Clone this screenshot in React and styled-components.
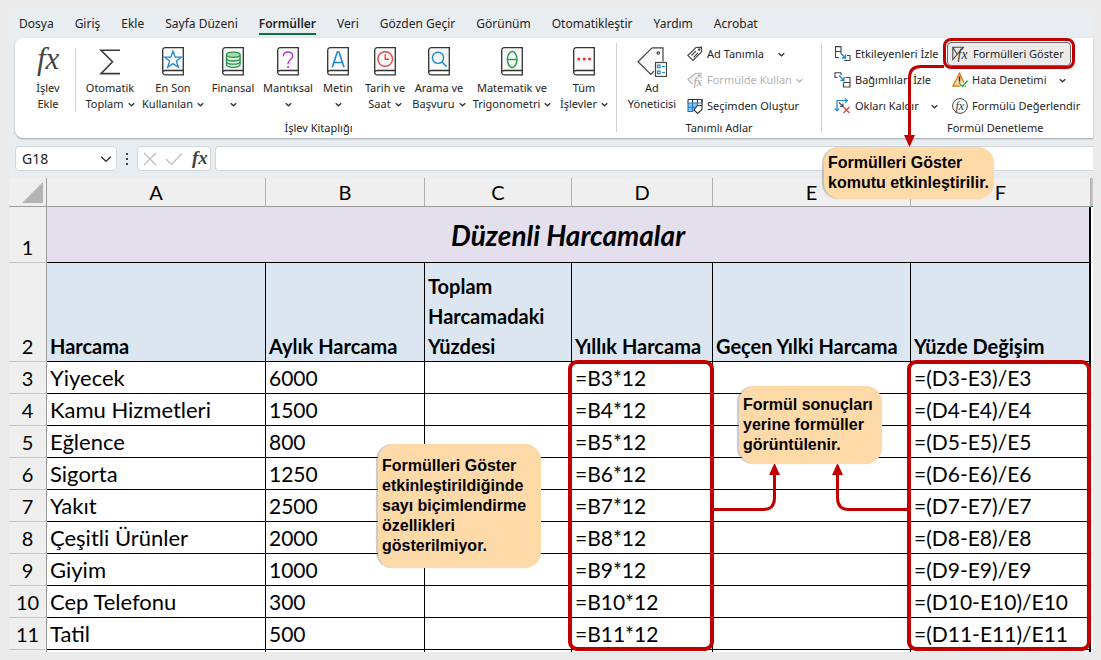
import React from 'react';
import styled, { createGlobalStyle, css } from 'styled-components';

const UI = '"Noto Sans", "Open Sans", sans-serif';
const SHEET = 'Lato, "Noto Sans", sans-serif';
const RED = '#c00000';

const GlobalStyle = createGlobalStyle`
  *, *::before, *::after { box-sizing: border-box; }
  body { margin: 0; background: #ebebeb; font-family: ${UI}; color: #242424; }
  button, input { font: inherit; color: inherit; }
  button { border: 0; padding: 0; background: none; cursor: pointer; }
`;

const Page = styled.main`
  padding: 9px 8px 8px 9px;
`;
const Window = styled.div`
  background: #e8edf1;
`;

/* Tabs */
const Tabs = styled.nav`
  display: flex;
  gap: 21px;
  height: 29px;
  padding: 6px 10px 0;
`;
const Tab = styled.a`
  height: 20px;
  font-size: 12px;
  line-height: 18px;
  color: #242424;
  text-decoration: none;
  white-space: nowrap;
  ${(p) => p.$active && css`
    font-weight: 600;
    border-bottom: 2px solid #107040;
  `}
`;

/* Ribbon */
const Ribbon = styled.div`
  display: flex;
  height: 100px;
  margin-left: 6px;
  background: #fff;
  border-radius: 8px 0 0 8px;
  box-shadow: 0 1px 2px rgba(0, 0, 0, 0.3);
`;
const Group = styled.section`
  display: flex;
  flex-direction: column;
  flex: ${(p) => (p.$grow ? '1 0 auto' : 'none')};
  padding-top: 3px;
  padding-left: ${(p) => p.$inset || 0}px;
`;
const GroupBody = styled.div`
  display: flex;
  height: 79px;
`;
const GroupLabel = styled.div`
  font-size: 11px;
  line-height: 16px;
  text-align: center;
  white-space: nowrap;
  ${(p) => p.$left && css`
    text-align: left;
    padding-left: 113px;
  `}
`;
const Divider = styled.div`
  width: 1px;
  height: ${(p) => p.$h}px;
  margin-top: ${(p) => p.$top}px;
  background: #d0d0d0;
`;
const BigButton = styled.button`
  display: flex;
  flex-direction: column;
  align-items: center;
  width: ${(p) => p.$w}px;
  padding-top: 6px;
  font-size: 11px;
  line-height: 16px;
  white-space: nowrap;
`;
const BigIcon = styled.span`
  display: grid;
  place-items: center;
  height: 29px;
  margin-bottom: 4px;
`;
const BigLine = styled.span`
  display: flex;
  align-items: center;
  justify-content: center;
  gap: 4px;
  height: 16px;
`;
const SmallColumn = styled.div`
  display: flex;
  flex-direction: column;
  width: ${(p) => p.$w}px;
`;
const SmallButton = styled.button`
  display: flex;
  align-items: center;
  gap: 4px;
  height: 26px;
  font-size: 11px;
  line-height: 16px;
  white-space: nowrap;
  color: ${(p) => (p.disabled ? '#b4b4b4' : '#242424')};
  svg { flex: none; }
`;
const Spread = styled.span`
  display: flex;
  align-items: center;
  gap: ${(p) => p.$gap}px;
`;
const ToggleWrap = styled.div`
  position: relative;
  height: 26px;
  margin-left: -5px;
  padding-top: 1px;
`;
const ToggleButton = styled(SmallButton)`
  width: 124px;
  height: 24px;
  padding-left: 4px;
  background: #ebebeb;
  border: 1px solid #6a6a6a;
  border-radius: 4px;
`;
const ToggleFrame = styled.div`
  position: absolute;
  inset: -3px auto auto -4px;
  width: 132px;
  height: 31px;
  border: 3px solid ${RED};
  border-radius: 8px;
  pointer-events: none;
`;

/* Formula bar */
const FormulaBar = styled.div`
  display: flex;
  height: 40px;
  padding: 8px 0 7px 6px;
`;
const box = css`
  height: 25px;
  background: #fff;
  border: 1px solid #d4d7da;
  border-radius: 4px;
`;
const NameBox = styled.div`
  ${box}
  display: flex;
  align-items: center;
  width: 102px;
  padding-right: 4px;
  input {
    flex: 1;
    min-width: 0;
    padding: 0 0 0 6px;
    border: 0;
    background: none;
    font-size: 14px;
    line-height: 20px;
  }
  button { display: flex; }
`;
const Dots = styled.span`
  display: grid;
  place-items: center;
  width: 20px;
`;
const FxBox = styled.div`
  ${box}
  display: flex;
  align-items: center;
  gap: 8px;
  width: 74px;
  padding-left: 5px;
  margin-right: 4px;
  button { display: flex; }
`;
const FormulaInput = styled.input`
  ${box}
  flex: 1;
  min-width: 0;
  padding: 0 8px;
  border-right: 0;
  border-radius: 4px 0 0 4px;
`;

/* Sheet */
const Sheet = styled.table`
  width: 100%;
  table-layout: fixed;
  border-collapse: separate;
  border-spacing: 0;
  background: #fff;
  font-family: ${SHEET};
  font-size: 21px;
  color: #000;
`;
const Corner = styled.td`
  height: 29px;
  padding: 4px 3px 2px 0;
  background: #efefef;
  border-right: 1px solid #9b9b9b;
  border-bottom: 1px solid #9b9b9b;
  svg { display: block; margin-left: auto; }
`;
const ColHead = styled.th`
  height: 29px;
  padding: 0;
  background: #efefef;
  border-right: 1px solid #b0b0b0;
  border-bottom: 1px solid #9b9b9b;
  font-size: 20px;
  font-weight: 400;
  line-height: 28px;
`;
const RowHead = styled.th`
  padding: 0;
  background: #efefef;
  border-right: 1px solid #9b9b9b;
  border-bottom: 1px solid #c4c4c4;
  font-size: 20px;
  font-weight: 400;
  line-height: 30px;
  vertical-align: bottom;
`;
const TitleCell = styled.td`
  height: 56px;
  padding: 0;
  background: #e3dfec;
  border-right: 2px solid #000;
  border-bottom: 1px solid #000;
  font-size: 28px;
  font-weight: 700;
  font-style: italic;
  text-align: center;
`;
const HeadCell = styled.td`
  height: 99px;
  padding: 0 0 0 3px;
  background: #dce6f0;
  border-right: ${(p) => (p.$last ? 2 : 1)}px solid #000;
  border-bottom: 1px solid #000;
  font-size: 20px;
  font-weight: 700;
  line-height: 30px;
  vertical-align: bottom;
  white-space: ${(p) => (p.$wrap ? 'normal' : 'nowrap')};
`;
const Cell = styled.td`
  position: relative;
  height: 32px;
  padding: 0 0 0 3px;
  border-right: ${(p) => (p.$last ? 2 : 1)}px solid #000;
  border-bottom: 1px solid #000;
  line-height: 31px;
  white-space: nowrap;
`;
const NameCell = styled(Cell)`
  font-size: 22px;
`;
const TailCell = styled.td`
  height: 2px;
  padding: 0;
  background: ${(p) => (p.$head ? '#efefef' : '#fff')};
  border-right: ${(p) => (p.$w ? `${p.$w}px solid ${p.$head ? '#9b9b9b' : '#000'}` : 0)};
`;
const Edge = styled.td`
  padding: 0;
  background: ${(p) => (p.$head ? '#c4c4c4' : '#fff')};
  border-bottom: 1px solid ${(p) => (p.$head ? '#107040' : '#d9d9d9')};
`;

/* Annotations */
const Frame = styled.div`
  position: absolute;
  z-index: 2;
  inset: -2px -2px auto -4px;
  height: 291px;
  border: 4px solid ${RED};
  border-radius: 9px;
  pointer-events: none;
`;
const Callout = styled.aside`
  position: absolute;
  z-index: 3;
  top: ${(p) => p.$top}px;
  left: ${(p) => p.$left}px;
  width: ${(p) => p.$w}px;
  padding: ${(p) => p.$pad} 4px;
  background: #fedaa8;
  border-radius: 16px;
  box-shadow: -2px 0 1px rgba(120, 120, 120, 0.4);
  color: #000;
  font: 700 16px/20px "Liberation Sans", Arial, sans-serif;
  white-space: nowrap;
`;
const Connector = styled.svg`
  position: absolute;
  z-index: 2;
  top: ${(p) => p.$top}px;
  left: ${(p) => p.$left}px;
  fill: none;
  stroke: ${RED};
  stroke-width: 3;
  overflow: visible;
  pointer-events: none;
`;

/* Icons */
const Chevron = ({ size = 7, color = '#333' }) => (
  <svg width={size} height={size} viewBox="0 0 7 7" fill="none" stroke={color} strokeWidth={size > 7 ? 0.8 : 1.3}>
    <path d="M.7 2.2 3.5 4.8 6.3 2.2" />
  </svg>
);
const FxGlyph = ({ w, h, size, x, y, color = '#333', weight = 400 }) => (
  <svg width={w} height={h} overflow="visible">
    <text x={x} y={y} fontSize={size} fontWeight={weight} fontStyle="italic" fontFamily="Liberation Serif, serif" fill={color}>fx</text>
  </svg>
);
const Book = ({ children }) => (
  <svg width="22" height="29" viewBox="0 0 22 29" fill="none">
    <path d="M3.5.7H21.3V23.5H3.5Q.7 23.5.7 25.6V3.5Q.7.7 3.5.7Z" fill="#fafafa" />
    <path d="M21.3 27.8H3.5Q.7 27.8.7 25V3.5Q.7.7 3.5.7H21.3V28.4M21.3 23.5H3.5Q.7 23.5.7 25.8" stroke="#333" strokeWidth="1.3" />
    {children}
  </svg>
);
const SigmaIcon = () => (
  <svg width="22" height="26" viewBox="0 0 22 26" fill="none" stroke="#3b3b3b" strokeWidth="1.6">
    <path d="M21 1.2H2L13.5 12.8 2 24.6H21" />
  </svg>
);
const StarIcon = () => (
  <Book><path d="m11 4.2 2.2 6h6.2l-5 3.9 1.9 6.1L11 16.6l-5.3 3.6 1.9-6.100-5-3.900h6.200Z" stroke="#1e88d2" strokeWidth="1.3" /></Book>
);
const CoinsIcon = () => (
  <Book>
    <g stroke="#2b9348" strokeWidth="1.3" fill="#d9f0de">
      <path d="M4.5 8v9.500c0 1.600 3 2.800 6.800 2.800s6.800-1.200 6.800-2.800V8" />
      <ellipse cx="11.3" cy="7.8" rx="6.8" ry="2.6" fill="#a5dcb1" />
      <path d="M4.500 11.200c0 1.600 3 2.800 6.800 2.800s6.800-1.200 6.800-2.800M4.500 14.400c0 1.600 3 2.800 6.800 2.800s6.800-1.200 6.800-2.800" fill="none" />
    </g>
  </Book>
);
const QuestionIcon = () => (
  <Book>
    <path d="M6.300 9.300C6.300 6.400 8.200 5 11 5s4.700 1.500 4.700 4c0 3.600-4.600 3.800-4.600 7.300v1" stroke="#b146c2" strokeWidth="1.5" />
    <circle cx="11.1" cy="20" r="1.1" fill="#b146c2" />
  </Book>
);
const LetterIcon = () => (
  <Book><path d="M5.300 20.300 10.300 5h1.700l5 15.300M7 15.500h8.300" stroke="#1e88d2" strokeWidth="1.6" /></Book>
);
const ClockIcon = () => (
  <Book><circle cx="11.2" cy="12" r="7.3" stroke="#e5484d" strokeWidth="1.4" /><path d="M11.200 7.300v5h4" stroke="#e5484d" strokeWidth="1.4" /></Book>
);
const SearchIcon = () => (
  <Book><circle cx="10" cy="10.8" r="5.6" stroke="#1e88d2" strokeWidth="1.4" /><path d="m14 14.800 4.500 5" stroke="#1e88d2" strokeWidth="1.5" /></Book>
);
const ThetaIcon = () => (
  <Book><ellipse cx="11.2" cy="12.5" rx="4.8" ry="8" stroke="#2b9f48" strokeWidth="1.5" /><path d="M6.400 12.500H16" stroke="#2b9f48" strokeWidth="1.5" /></Book>
);
const MoreIcon = () => (
  <Book><g fill="#e53935"><circle cx="5.8" cy="12" r="1.6" /><circle cx="11.2" cy="12" r="1.6" /><circle cx="16.6" cy="12" r="1.6" /></g></Book>
);
const NameManagerIcon = () => (
  <svg width="30" height="30" viewBox="0 0 30 30" fill="none" stroke="#444" strokeWidth="1.2">
    <path d="M15 .8 1 14.800 13.800 27.500 17 24.200M15 .8H26V14.500" fill="#fafafa" />
    <circle cx="21.3" cy="6" r="1.2" />
    <rect x="18.5" y="15.5" width="11" height="14" fill="#fff" />
    <path d="M25 19.500H28M25 25.500H28" stroke="#1e88d2" />
    <path d="M20.500 18.200h2.500v2.500h-2.500ZM20.500 24.200h2.500v2.500h-2.500Z" stroke="#1e88d2" />
  </svg>
);
const TagIcon = () => (
  <svg width="16" height="16" viewBox="0 0 16 16" fill="none" stroke="#444" strokeWidth="1.1">
    <path d="M9 1.500 14.500 1.200V6L6 14.500.8 9.500Z" />
    <circle cx="12.2" cy="3.6" r=".7" />
    <path d="M4.500 9.500 9 5M6.500 11.300 11 7" />
  </svg>
);
const TagFxIcon = () => (
  <svg width="16" height="16" viewBox="0 0 16 16" fill="none" stroke="#b4b4b4" strokeWidth="1.1">
    <path d="M5.500 12 .8 7.500 8.500 1.200H14V6" fill="#f2f2f2" />
    <circle cx="11.8" cy="3.5" r=".7" />
    <text x="6.500" y="14" fontSize="12" fontStyle="italic" fontFamily="Liberation Serif" fill="#a0a0a0" stroke="none">fx</text>
  </svg>
);
const SelectionIcon = () => (
  <svg width="16" height="16" viewBox="0 0 16 16" fill="none" strokeWidth="1.1">
    <path d="M1 5H10V13.500H1Z" fill="#8cc4f0" />
    <path d="M1 1.500H15V5" stroke="#333" />
    <path d="M5.500 1.500V5M10.500 1.500V5M15 1.500V7M1 1.500V5" stroke="#333" />
    <path d="M6 13.500H1V5H15M1 9.300H8M5.500 5V13.500M10.500 5V7" stroke="#1e78c2" />
    <path d="M10.500 7.500H15V11.500L10.500 15.500 7 12Z" fill="#fff" stroke="#333" />
  </svg>
);
const PrecedentsIcon = () => (
  <svg width="17" height="16" viewBox="0 0 17 16" fill="none" stroke="#444" strokeWidth="1.1">
    <path d="M7 5.500H1.500V.6H7ZM5 11.500H1.500V5.500M7 5.500V7M10 14.500H16V9.500H13" />
    <path d="m6.500 7 5 5M11.500 8.500V12H8" stroke="#1e88d2" strokeWidth="1.3" />
  </svg>
);
const DependentsIcon = () => (
  <svg width="17" height="16" viewBox="0 0 17 16" fill="none" stroke="#444" strokeWidth="1.1">
    <path d="M3.500 5.500H1V.8H7V3M9.500 10.500V15H16V10.500H9.500M11.500 5.500H16V10.500" />
    <path d="m5 3.500 5 5M10 5V8.500H6.500" stroke="#1e88d2" strokeWidth="1.3" />
  </svg>
);
const RemoveArrowsIcon = () => (
  <svg width="17" height="16" viewBox="0 0 17 16" fill="none" stroke="#1e88d2" strokeWidth="1.2">
    <path d="M3 13V2.500H13M11 .3l2.300 2.200L11 4.700M.8 10.700 3 13l2.200-2.300" />
    <path d="m5 4.500 4 4M9 5.500v3H6" stroke="#446" />
    <path d="m9.500 9 6 6M15.500 9l-6 6" stroke="#e5484d" strokeWidth="1.4" />
  </svg>
);
const ShowFormulasIcon = () => (
  <svg width="17" height="16" viewBox="0 0 17 16" fill="none" stroke="#444" strokeWidth="1.1">
    <path d="M11.500 1.200.8 13.500V1.200H11.500ZM1 1.500 5 8" />
    <text x="5.500" y="13" fontSize="14" fontStyle="italic" fontFamily="Liberation Serif" fill="#333" stroke="none">fx</text>
  </svg>
);
const ErrorCheckIcon = () => (
  <svg width="16" height="16" viewBox="0 0 16 16" fill="none">
    <path d="M7.500 1.200 13.500 14H1Z" fill="#ffe0a8" stroke="#e07a10" strokeWidth="1.4" />
    <path d="M7.500 4.500V9.500M7.500 10.500V12" stroke="#222" strokeWidth="1.5" />
    <path d="m7.500 11.500 3 3 5-6" stroke="#fff" strokeWidth="3" />
    <path d="m7.500 11.500 3 3 5-6" stroke="#2b9f48" strokeWidth="1.4" />
  </svg>
);
const EvaluateIcon = () => (
  <svg width="16" height="16" viewBox="0 0 16 16" fill="none">
    <circle cx="8" cy="8" r="7.4" stroke="#444" />
    <text x="3.500" y="11.500" fontSize="12" fontStyle="italic" fontFamily="Liberation Serif" fill="#333">fx</text>
  </svg>
);

const tabs = ['Dosya', 'Giriş', 'Ekle', 'Sayfa Düzeni', 'Formüller', 'Veri', 'Gözden Geçir', 'Görünüm', 'Otomatikleştir', 'Yardım', 'Acrobat'];

const library = [
  { icon: <SigmaIcon />, top: 'Otomatik', bottom: 'Toplam', w: 68 },
  { icon: <StarIcon />, top: 'En Son', bottom: 'Kullanılan', w: 58 },
  { icon: <CoinsIcon />, top: 'Finansal', w: 62 },
  { icon: <QuestionIcon />, top: 'Mantıksal', w: 48 },
  { icon: <LetterIcon />, top: 'Metin', w: 52 },
  { icon: <ClockIcon />, top: 'Tarih ve', bottom: 'Saat', w: 42 },
  { icon: <SearchIcon />, top: 'Arama ve', bottom: 'Başvuru', w: 66 },
  { icon: <ThetaIcon />, top: 'Matematik ve', bottom: 'Trigonometri', w: 80 },
  { icon: <MoreIcon />, top: 'Tüm', bottom: 'İşlevler', w: 64 },
];

const expenses = [
  ['Yiyecek', 6000], ['Kamu Hizmetleri', 1500], ['Eğlence', 800], ['Sigorta', 1250], ['Yakıt', 2500],
  ['Çeşitli Ürünler', 2000], ['Giyim', 1000], ['Cep Telefonu', 300], ['Tatil', 500],
];

const columnWidths = [38, 219, 159, 147, 141, 198, 180, 2];

function RibbonBar() {
  return (
    <Ribbon>
      <Group $inset={6}>
        <GroupBody>
          <BigButton $w={54}>
            <BigIcon><FxGlyph w={24} h={29} size={31} x={1} y={22} color="#444" /></BigIcon>
            <BigLine>İşlev</BigLine>
            <BigLine>Ekle</BigLine>
          </BigButton>
          <Divider $h={62} $top={8} />
          {library.map((b) => (
            <BigButton key={b.top} $w={b.w}>
              <BigIcon>{b.icon}</BigIcon>
              <BigLine>{b.top}</BigLine>
              <BigLine>{b.bottom}<Chevron /></BigLine>
            </BigButton>
          ))}
        </GroupBody>
        <GroupLabel>İşlev Kitaplığı</GroupLabel>
      </Group>
      <Divider $h={89} $top={5} />
      <Group>
        <GroupBody>
          <BigButton $w={70}>
            <BigIcon><NameManagerIcon /></BigIcon>
            <BigLine>Ad</BigLine>
            <BigLine>Yöneticisi</BigLine>
          </BigButton>
          <SmallColumn $w={134}>
            <SmallButton><TagIcon /><Spread $gap={14}>Ad Tanımla <Chevron /></Spread></SmallButton>
            <SmallButton disabled><TagFxIcon /><Spread $gap={4}>Formülde Kullan <Chevron color="#b4b4b4" /></Spread></SmallButton>
            <SmallButton><SelectionIcon />Seçimden Oluştur</SmallButton>
          </SmallColumn>
        </GroupBody>
        <GroupLabel>Tanımlı Adlar</GroupLabel>
      </Group>
      <Divider $h={89} $top={5} />
      <Group $grow $inset={12}>
        <GroupBody>
          <SmallColumn $w={118}>
            <SmallButton><PrecedentsIcon />Etkileyenleri İzle</SmallButton>
            <SmallButton><DependentsIcon />Bağımlıları İzle</SmallButton>
            <SmallButton><RemoveArrowsIcon /><Spread $gap={12}>Okları Kaldır <Chevron /></Spread></SmallButton>
          </SmallColumn>
          <SmallColumn $w={134}>
            <ToggleWrap>
              <ToggleButton aria-pressed="true"><ShowFormulasIcon />Formülleri Göster</ToggleButton>
              <ToggleFrame />
              <Connector width="40" height="84" $top={24} $left={-43}>
                <path d="M40 1.500H17Q5.500 1.500 5.500 13V72" />
                <path d="M0 70H11L5.500 82Z" fill={RED} stroke="none" />
              </Connector>
              <Callout $top={106} $left={-123} $w={170} $pad="6px">
                Formülleri Göster<br />komutu etkinleştirilir.
              </Callout>
            </ToggleWrap>
            <SmallButton><ErrorCheckIcon /><Spread $gap={12}>Hata Denetimi <Chevron /></Spread></SmallButton>
            <SmallButton><EvaluateIcon />Formülü Değerlendir</SmallButton>
          </SmallColumn>
        </GroupBody>
        <GroupLabel $left>Formül Denetleme</GroupLabel>
      </Group>
    </Ribbon>
  );
}

function Formula() {
  return (
    <FormulaBar>
      <NameBox>
        <input aria-label="Ad Kutusu" defaultValue="G18" />
        <button aria-label="Ad listesi"><Chevron size={12} /></button>
      </NameBox>
      <Dots>
        <svg width="3" height="12" fill="#444"><rect width="2" height="2" /><rect width="2" height="2" y="5" /><rect width="2" height="2" y="10" /></svg>
      </Dots>
      <FxBox>
        <button aria-label="İptal"><svg width="14" height="14" stroke="#bdbdbd" strokeWidth="1.2"><path d="m1 1 12 12M13 1 1 13" /></svg></button>
        <button aria-label="Gir"><svg width="18" height="14" fill="none" stroke="#bdbdbd" strokeWidth="1.2"><path d="m1 7 5.500 5.500L17 1.500" /></svg></button>
        <button aria-label="İşlev ekle"><FxGlyph w={16} h={18} size={19} x={1} y={14} weight={700} color="#444" /></button>
      </FxBox>
      <FormulaInput aria-label="Formül çubuğu" />
    </FormulaBar>
  );
}

function Grid() {
  return (
    <Sheet>
      <colgroup>{columnWidths.map((w, i) => <col key={i} width={w} />)}</colgroup>
      <thead>
        <tr>
          <Corner><svg width="21" height="22"><path d="M21 0V21H0Z" fill="#b4b4b4" /></svg></Corner>
          {['A', 'B', 'C', 'D', 'E', 'F'].map((c) => <ColHead key={c} scope="col">{c}</ColHead>)}
          <Edge $head />
        </tr>
      </thead>
      <tbody>
        <tr>
          <RowHead scope="row">1</RowHead>
          <TitleCell colSpan={6}>Düzenli Harcamalar</TitleCell>
          <Edge />
        </tr>
        <tr>
          <RowHead scope="row">2</RowHead>
          <HeadCell>Harcama</HeadCell>
          <HeadCell>Aylık Harcama</HeadCell>
          <HeadCell $wrap>Toplam Harcamadaki Yüzdesi</HeadCell>
          <HeadCell>Yıllık Harcama</HeadCell>
          <HeadCell>Geçen Yılki Harcama</HeadCell>
          <HeadCell $last>Yüzde Değişim</HeadCell>
          <Edge />
        </tr>
        {expenses.map(([name, monthly], i) => {
          const n = i + 3;
          const first = i === 0;
          return (
            <tr key={n}>
              <RowHead scope="row">{n}</RowHead>
              <NameCell>{name}</NameCell>
              <Cell>{monthly}</Cell>
              <Cell>
                {first && (
                  <Callout $top={82} $left={-47} $w={163} $pad="12px">
                    Formülleri Göster<br />etkinleştirildiğinde<br />sayı biçimlendirme<br />özellikleri<br />gösterilmiyor.
                  </Callout>
                )}
              </Cell>
              <Cell>{`=B${n}*12`}{first && <Frame />}</Cell>
              <Cell>
                {first && (
                  <>
                    <Connector width="198" height="50" $top={101} $left={0}>
                      <path d="M0 46.500H50Q61.500 46.500 61.500 35V10M196 46.500H136Q124.500 46.500 124.500 35V10" />
                      <path d="M56 12H67L61.500 0ZM119 12H130L124.500 0Z" fill={RED} stroke="none" />
                    </Connector>
                    <Callout $top={24} $left={26} $w={143} $pad="9px">
                      Formül sonuçları<br />yerine formüller<br />görüntülenir.
                    </Callout>
                  </>
                )}
              </Cell>
              <Cell $last>{`=(D${n}-E${n})/E${n}`}{first && <Frame />}</Cell>
              <Edge />
            </tr>
          );
        })}
        <tr>
          <TailCell $head $w={1} />
          {[1, 1, 1, 1, 1, 2].map((w, i) => <TailCell key={i} $w={w} />)}
          <TailCell />
        </tr>
      </tbody>
    </Sheet>
  );
}

export default function App() {
  return (
    <>
      <GlobalStyle />
      <Page>
        <Window>
          <Tabs>
            {tabs.map((t) => <Tab key={t} href="#" $active={t === 'Formüller'}>{t}</Tab>)}
          </Tabs>
          <RibbonBar />
          <Formula />
          <Grid />
        </Window>
      </Page>
    </>
  );
}
